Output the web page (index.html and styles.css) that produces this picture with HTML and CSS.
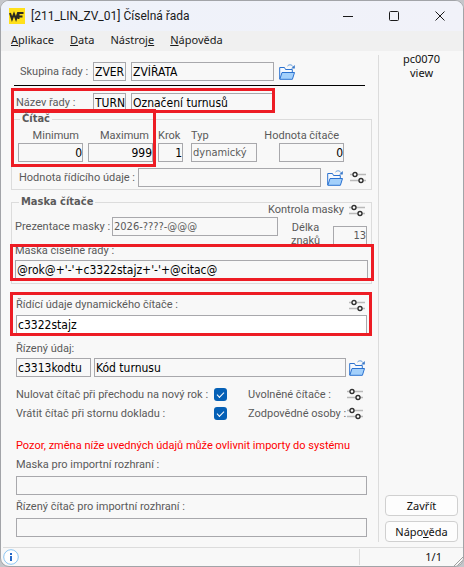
FILE: index.html
```html
<!DOCTYPE html>
<html lang="cs">
<head>
<meta charset="utf-8">
<title>[211_LIN_ZV_01] Číselná řada</title>
<link rel="stylesheet" href="styles.css">
</head>
<body>
<svg width="0" height="0" class="defs" aria-hidden="true">
  <symbol id="folder" viewBox="0 0 16 16">
    <path d="M.7 15V3.5h4.8l1 2h6.8v3" fill="#f4f9ff" stroke="#2b72d0"/>
    <path d="M.8 15.3 3 8.5h12.5L13.4 15.3z" fill="#a3d0fb" stroke="#2b72d0"/>
    <path d="M8.5 2C10 .4 12.5.3 14 2.6" fill="none" stroke="#5795da"/>
    <path d="M15.8 1v3.6h-3.6z" fill="#3978c8"/>
  </symbol>
  <symbol id="sliders" viewBox="0 0 16 13">
    <path d="M0 3.5h16M0 9.5h16" stroke="#b9b9b9" stroke-width="1.4"/>
    <circle cx="5" cy="3.5" r="2" fill="#fff" stroke="#303030" stroke-width="1.4"/>
    <circle cx="11" cy="9.5" r="2" fill="#fff" stroke="#303030" stroke-width="1.4"/>
  </symbol>
</svg>
<div class="window">
  <header class="titlebar">
    <svg class="logo" viewBox="0 0 16 16" aria-hidden="true"><path d="M0 0h16v16H0z" fill="#ffe01b"/><path d="M1 5l2 6 2-5 2 5 2-6h5.5M9.5 8.5h4M9.5 5v6" fill="none" stroke="#2c2a22" stroke-width="2"/></svg>
    <h1>[211_LIN_ZV_01] Číselná řada</h1>
    <button class="caption" aria-label="Minimalizovat"><svg viewBox="0 0 10 10"><path d="M0 5.5h10"/></svg></button>
    <button class="caption" aria-label="Maximalizovat"><svg viewBox="0 0 10 10"><rect x=".5" y=".5" width="9" height="9" rx="1"/></svg></button>
    <button class="caption" aria-label="Zavřít okno"><svg viewBox="0 0 10 10"><path d="M.5.5l9 9M9.5.5l-9 9"/></svg></button>
  </header>
  <nav class="menu">
    <a href="#"><u>A</u>plikace</a><a href="#"><u>D</u>ata</a><a href="#">Nástroj<u>e</u></a><a href="#"><u>N</u>ápověda</a>
  </nav>
  <div class="content">
    <form class="form">
      <div class="row head group">
        <label for="skupina">Skupina řady :</label>
        <input id="skupina" class="code" value="ZVER">
        <input class="name" aria-label="Název skupiny" value="ZVÍŘATA">
        <button type="button" class="tool" aria-label="Otevřít"><svg class="folder"><use href="#folder"/></svg></button>
      </div>
      <hr>
      <div class="row head title">
        <label for="nazev">Název řady :</label>
        <input id="nazev" class="code" value="TURN">
        <input class="name" aria-label="Popis řady" value="Označení turnusů">
        <span class="mark mark-title"></span>
      </div>

      <fieldset class="counter">
        <legend>Čítač</legend>
        <div class="counter-grid">
          <label class="end" for="min">Minimum</label>
          <label class="end" for="max">Maximum</label>
          <label for="krok">Krok</label>
          <label for="typ">Typ</label>
          <label class="end" for="hodnota">Hodnota čítače</label>
          <input id="min" class="num" value="0">
          <input id="max" class="num" value="999">
          <input id="krok" class="num step" value="1">
          <input id="typ" class="soft" value="dynamický" readonly>
          <input id="hodnota" class="num last" value="0">
        </div>
        <div class="row control">
          <label for="ridici">Hodnota řídícího údaje :</label>
          <input id="ridici" class="grow">
          <button type="button" class="tool" aria-label="Otevřít"><svg class="folder"><use href="#folder"/></svg></button>
          <button type="button" class="tool" aria-label="Nastavení"><svg class="sliders"><use href="#sliders"/></svg></button>
        </div>
        <span class="mark mark-range"></span>
      </fieldset>

      <fieldset class="mask">
        <legend>Maska čítače</legend>
        <div class="row check">
          <span>Kontrola masky</span>
          <button type="button" class="tool" aria-label="Kontrola masky"><svg class="sliders"><use href="#sliders"/></svg></button>
        </div>
        <div class="row preview">
          <label for="prezentace">Prezentace masky :</label>
          <input id="prezentace" class="grow soft" value="2026-????-@@@" readonly>
          <label class="length" for="delka">Délka znaků</label>
          <input id="delka" class="num soft chars" value="13" readonly>
        </div>
        <div class="stack">
          <label for="maska">Maska číselné řady :</label>
          <input id="maska" value="@rok@+'-'+c3322stajz+'-'+@citac@">
          <span class="mark mark-mask"></span>
        </div>
      </fieldset>

      <div class="stack dynamic">
        <div class="row between">
          <label for="dyn">Řídící údaje dynamického čítače :</label>
          <button type="button" class="tool" aria-label="Nastavení"><svg class="sliders"><use href="#sliders"/></svg></button>
        </div>
        <input id="dyn" class="white" value="c3322stajz">
        <span class="mark mark-dynamic"></span>
      </div>

      <div class="stack driven">
        <label for="rizeny">Řízený údaj:</label>
        <div class="row">
          <input id="rizeny" class="key" value="c3313kodtu">
          <input class="grow" aria-label="Popis údaje" value="Kód turnusu">
          <button type="button" class="tool" aria-label="Otevřít"><svg class="folder"><use href="#folder"/></svg></button>
        </div>
      </div>

      <div class="options">
        <label for="nulovat">Nulovat čítač při přechodu na nový rok :</label>
        <input id="nulovat" type="checkbox" checked>
        <span>Uvolněné čítače :</span>
        <button type="button" class="tool" aria-label="Uvolněné čítače"><svg class="sliders"><use href="#sliders"/></svg></button>
        <label for="vratit">Vrátit čítač při stornu dokladu :</label>
        <input id="vratit" type="checkbox" checked>
        <span>Zodpovědné osoby :</span>
        <button type="button" class="tool" aria-label="Zodpovědné osoby"><svg class="sliders"><use href="#sliders"/></svg></button>
      </div>

      <p class="warning">Pozor, změna níže uvedných údajů může ovlivnit importy do systému</p>

      <div class="stack import">
        <label for="imp1">Maska pro importní rozhraní :</label>
        <input id="imp1">
      </div>
      <div class="stack import">
        <label for="imp2">Řízený čítač pro importní rozhraní :</label>
        <input id="imp2">
      </div>
    </form>
    <aside class="side">
      <p>pc0070<br>view</p>
      <button type="button" class="btn">Zavřít</button>
      <button type="button" class="btn">Nápo<u>v</u>ěda</button>
    </aside>
  </div>
  <footer class="status">
    <svg class="info" viewBox="0 0 16 16" aria-hidden="true"><circle cx="8" cy="8" r="7.3" fill="#fff" stroke="#8cc5f2"/><path d="M8 4v2M8 7v5" stroke="#2468c8" stroke-width="2"/></svg>
    <span class="page">1/1</span>
    <svg class="grip" viewBox="0 0 10 10" aria-hidden="true"><path d="M1 10l9-9M4 10l6-6M7 10l3-3" fill="none" stroke="#a0a0a0"/></svg>
  </footer>
</div>
</body>
</html>
```
FILE: styles.css
```css
* { box-sizing: border-box; }

body {
  margin: 0;
  background: #c4c6ca;
  color: #5a5a5a;
  font: 11px/14px "Noto Sans", sans-serif;
}

.defs { position: absolute; }

.window {
  display: flex;
  flex-direction: column;
  min-height: 100vh;
  border: 1px solid #a2a4a8;
  border-radius: 9px;
  background: #f8f8f8;
  overflow: hidden;
}

.titlebar {
  display: flex;
  align-items: center;
  height: 30px;
  padding-left: 8px;
  background: linear-gradient(90deg, #eef2fa, #f1f2f9);
  color: #1a1a1a;
}
.titlebar h1 {
  flex: 1;
  margin: 0 0 0 6px;
  font: 12px/16px Roboto, sans-serif;
  white-space: nowrap;
}
.logo { width: 16px; height: 16px; }
.caption {
  width: 46px;
  height: 30px;
  padding: 0;
  border: 0;
  background: none;
}
.caption svg {
  display: block;
  width: 10px;
  height: 10px;
  margin: 0 auto;
  fill: none;
  stroke: #1a1a1a;
}

.menu {
  display: flex;
  gap: 16px;
  height: 20px;
  padding-left: 10px;
  background: #f0f0f0;
  line-height: 18px;
}
.menu a { color: #1a1a1a; text-decoration: none; }

.content { display: flex; flex: 1; }
.form {
  flex: 1;
  min-width: 0;
  padding: 11px 6px 0 10px;
  font-family: Roboto, sans-serif;
}

.row { display: flex; align-items: center; }
.grow { flex: 1; }
label, span { white-space: nowrap; }

input {
  min-width: 0;
  height: 19px;
  margin: 0;
  padding: 0 0 0 1px;
  border: 1px solid #a8a8ac;
  border-radius: 0;
  background: #f8f8f8;
  color: #000;
  font: 12px/17px "DejaVu Sans Condensed", sans-serif;
}
.num { text-align: right; }
.soft { color: #5a5a5a; font: 11px/17px "DejaVu Sans Condensed", sans-serif; }
.white { background: #fff; }

.tool { display: block; padding: 0; border: 0; background: none; }
.folder { display: block; width: 16px; height: 16px; }
.sliders { display: block; width: 16px; height: 13px; }

.head { position: relative; }
.head label { width: 77px; margin-left: 5px; }
.head.group label { width: 73px; margin-left: 9px; }
.code { width: 33px; margin-right: 5px; }
.name { width: 143px; margin-right: 5px; }
hr { height: 1px; margin: 4px 7px 7px 3px; border: 0; background: #000; }

fieldset {
  position: relative;
  min-width: 0;
  margin: 0;
  padding: 0 5px;
  border: 1px solid #dcdcdc;
}
legend {
  margin-left: 4px;
  padding: 0 2px;
  font-family: "DejaVu Sans Condensed", sans-serif;
  font-weight: bold;
}

.counter { height: 78px; padding-left: 6px; }
.counter legend { margin-left: 2px; }
.counter-grid {
  display: grid;
  grid-template-columns: 65px 65px 28px 66px 1fr;
  column-gap: 5px;
  padding-top: 3px;
}
.counter-grid .end { text-align: right; padding-right: 4px; }
.counter-grid .end:nth-child(5) { padding-right: 27px; }
.counter-grid .last { width: 65px; margin-right: 22px; justify-self: end; }
.step { width: 25px; }
.control { gap: 6px; margin: 6px 0 0 1px; }
.control label { width: 113px; }
.control .folder { margin-right: 1px; }

.mask { margin-top: 5px; height: 89px; padding: 0 3px; }
.check { justify-content: flex-end; gap: 5px; height: 14px; margin: -6px 3px 0 0; }
.preview { align-items: flex-start; height: 27px; margin-right: 1px; }
.preview label:first-child { width: 97px; line-height: 19px; }
.length {
  width: 55px;
  padding: 4px 12px 0;
  line-height: 13px;
  white-space: normal;
  text-align: center;
}
.chars { width: 34px; margin-top: 9px; }

.stack { position: relative; display: flex; flex-direction: column; }
.mask .stack { gap: 2px; }
.dynamic { margin: 14px 5px 0; gap: 3px; }
.between { justify-content: space-between; }
.between .tool { margin-right: 2px; }
.driven { margin: 8px 5px 0; gap: 2px; }
.driven .row { gap: 3px; margin-right: 2px; }
.key { width: 75px; }

.options {
  display: grid;
  grid-template-columns: 198px 34px 1fr 16px;
  grid-auto-rows: 19px;
  align-items: center;
  margin: 8px 9px 0 5px;
}
input[type="checkbox"] {
  appearance: none;
  width: 13px;
  height: 13px;
  padding: 0;
  border: 0;
  border-radius: 3px;
  background: #0560b6;
  display: grid;
  place-items: center;
}
input[type="checkbox"]::after {
  content: "";
  width: 6px;
  height: 3px;
  margin-bottom: 2px;
  border: solid #fff;
  border-width: 0 0 1px 1px;
  transform: rotate(-45deg);
}

.warning {
  margin: 16px 5px 0;
  color: #f00;
  white-space: nowrap;
}
.import { margin: 5px 5px 0; gap: 4px; }

.mark { position: absolute; border: 3px solid #ed1c24; pointer-events: none; }
.mark-title { left: 0; top: -5px; width: 264px; height: 25px; }
.mark-range { left: -1px; top: -17px; width: 145px; height: 58px; }
.mark-mask { left: -5px; right: -6px; top: 0; bottom: -2px; }
.mark-dynamic { left: -6px; right: -5px; top: -6px; bottom: -2px; }

.side {
  display: flex;
  flex-direction: column;
  gap: 5px;
  width: 85px;
  margin: 4px 0 5px;
  padding: 0 5px 0 6px;
  border-left: 1px solid #dcdcdc;
  color: #111;
  text-align: center;
}
.side p { margin: -3px 0 auto; line-height: 14px; }
.btn {
  height: 21px;
  padding: 0;
  border: 1px solid #d0d0d0;
  border-radius: 4px;
  background: #fdfdfd;
  color: #111;
  font: inherit;
}

.status {
  position: relative;
  display: flex;
  align-items: center;
  height: 19px;
  margin-left: 2px;
  border-top: 1px solid #dcdcdc;
  color: #111;
}
.info { width: 16px; height: 16px; margin-right: auto; }
.page {
  width: 104px;
  height: 16px;
  padding-right: 21px;
  border-left: 1px solid #dcdcdc;
  line-height: 16px;
  text-align: right;
}
.grip { position: absolute; right: 0; bottom: 0; width: 10px; height: 10px; }
```
